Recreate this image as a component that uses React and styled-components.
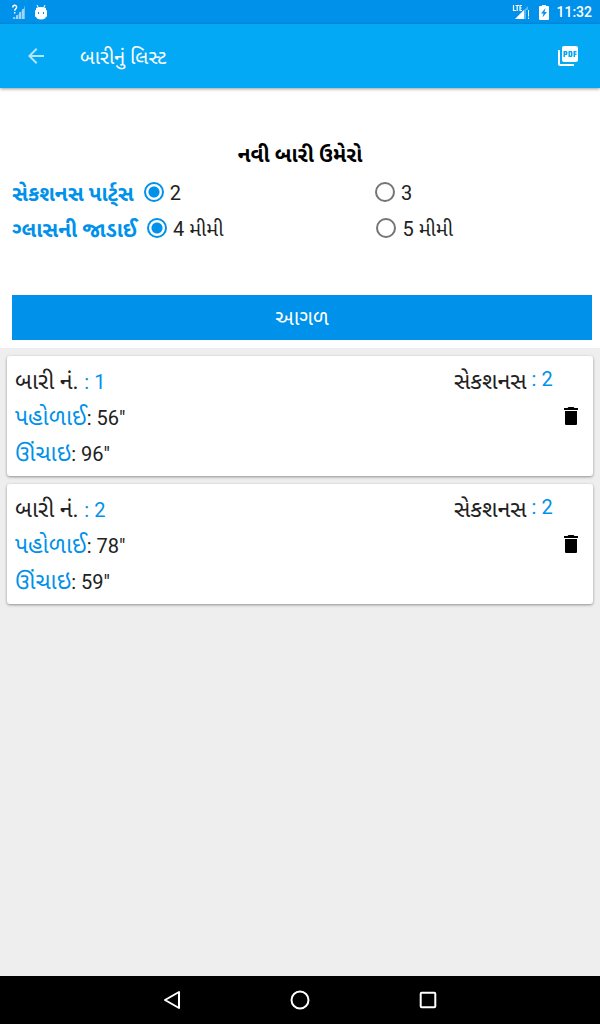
import React, { useState } from 'react'
import styled, { createGlobalStyle } from 'styled-components'
import { MdArrowBack, MdPictureAsPdf } from 'react-icons/md'

const windows = [
  { id: 1, width: 56, height: 96, sections: 2 },
  { id: 2, width: 78, height: 59, sections: 2 },
]

export default function App() {
  const [parts, setParts] = useState('2')
  const [glass, setGlass] = useState('4')

  return (
    <Screen>
      <GlobalStyle />
      <StatusBar>
        <StatusGroup>
          <svg width="14" height="16" viewBox="0 0 14 16">
            <path d="M1 15V13H3V15ZM4 15V11H6V15ZM7 15V8H9V15ZM10 15V5H12V15ZM12.500 15V2H13V15Z" fill="#fff" opacity=".5" />
            <path d="M2 15L13 3V15Z" fill="#fff" opacity=".25" />
            <path d="M.8 3.500C.8 .6 4.600 .6 4.600 3.200C4.600 4.800 2.700 4.800 2.700 6.800M2.700 8V9.600" fill="none" stroke="#fff" strokeWidth="1.500" />
          </svg>
          <svg width="12" height="15" viewBox="0 0 12 15">
            <path d="M2 0L3.500 3M10 0L8.500 3" stroke="#fff" strokeWidth="1" />
            <path fillRule="evenodd" d="M1 3Q6 1 11 3V5Q12 5 12 6V11Q12 12 11 12Q10 14.500 6 14.500Q2 14.500 1 12Q0 12 0 11V6Q0 5 1 5ZM3 7V9H4V7ZM8 7V9H9V7Z" fill="#fff" />
          </svg>
        </StatusGroup>
        <StatusGroup>
          <svg width="18" height="16" viewBox="0 0 18 16">
            <path d="M16 2V6H14V15H3Z" fill="#fff" opacity=".35" />
            <path d="M3 15L12 6V15Z" fill="#fff" />
            <path d="M1.500 1V6.500H4M3.500 1.500H7M5.200 1.500V7M10 1.500H8V6.500H10M8 4H9.700" fill="none" stroke="#fff" strokeWidth="1.200" />
            <path d="M16.500 6V12.500M16.500 13.500V15" stroke="#fff" />
          </svg>
          <svg width="10" height="15" viewBox="0 0 10 15">
            <path fillRule="evenodd" d="M3 0H7V1H9Q10 1 10 2V14Q10 15 9 15H1Q0 15 0 14V2Q0 1 1 1H3ZM6.500 3L2 8.500H4.500L3.500 12.500L8 7H5.500Z" fill="#fff" />
          </svg>
          <Clock>11:32</Clock>
        </StatusGroup>
      </StatusBar>

      <AppBar>
        <BarButton aria-label="Back" $dim><MdArrowBack size={24} /></BarButton>
        <PageTitle>બારીનું લિસ્ટ</PageTitle>
        <BarButton aria-label="PDF"><MdPictureAsPdf size={24} /></BarButton>
      </AppBar>

      <Form onSubmit={(e) => e.preventDefault()}>
        <FormTitle>નવી બારી ઉમેરો</FormTitle>
        <Field>
          <Legend id="parts">સેકશનસ પાર્ટ્સ</Legend>
          <Options role="radiogroup" aria-labelledby="parts">
            {['2', '3'].map((v) => (
              <Option key={v}>
                <Radio name="parts" checked={parts === v} onChange={() => setParts(v)} />
                {v}
              </Option>
            ))}
          </Options>
        </Field>
        <Field>
          <Legend id="glass">ગ્લાસની જાડાઈ</Legend>
          <Options role="radiogroup" aria-labelledby="glass">
            {['4', '5'].map((v) => (
              <Option key={v}>
                <Radio name="glass" checked={glass === v} onChange={() => setGlass(v)} />
                {v} મીમી
              </Option>
            ))}
          </Options>
        </Field>
        <NextButton type="submit">આગળ</NextButton>
      </Form>

      <List>
        {windows.map((w) => (
          <Card key={w.id}>
            <Details>
              <Line><Name>બારી નં. </Name><Value $blue>: {w.id}</Value></Line>
              <Line><Name $blue>પહોળાઈ</Name><Value>: {w.width}"</Value></Line>
              <Line><Name $blue>ઊંચાઇ</Name><Value>: {w.height}"</Value></Line>
            </Details>
            <Side>
              <SectionLine>
                <Name>સેકશનસ</Name>
                <SectionValue $blue>: {w.sections}</SectionValue>
              </SectionLine>
              <DeleteButton aria-label="Delete">
                <svg width="24" height="24" viewBox="0 0 24 24">
                  <path d="M5 4H8.500L9.500 3H14.500L15.500 4H19V6H5ZM6 7H18V20Q18 21 17 21H7Q6 21 6 20Z" />
                </svg>
              </DeleteButton>
            </Side>
          </Card>
        ))}
      </List>

      <NavBar>
        <NavButton aria-label="Back">
          <svg width="20" height="20" viewBox="0 0 20 20"><path d="M17 2V18L3 10Z" /></svg>
        </NavButton>
        <NavButton aria-label="Home">
          <svg width="20" height="20" viewBox="0 0 20 20"><circle cx="10" cy="10" r="8.500" /></svg>
        </NavButton>
        <NavButton aria-label="Recent apps">
          <svg width="20" height="20" viewBox="0 0 20 20"><rect x="2.700" y="2.700" width="14.600" height="14.600" rx="1" /></svg>
        </NavButton>
      </NavBar>
    </Screen>
  )
}

const GlobalStyle = createGlobalStyle`
* {
  box-sizing: border-box;
}
body {
  margin: 0;
  font-family: Roboto, "Noto Sans Gujarati", "Noto Sans", sans-serif;
  color: #212121;
}
button {
  padding: 0;
  border: 0;
  background: none;
  font-family: inherit;
  cursor: pointer;
}
svg {
  display: block;
}
`
const Screen = styled.div`
display: flex;
flex-direction: column;
min-height: 100vh;
background: #eee;
`
const StatusBar = styled.div`
display: flex;
justify-content: space-between;
align-items: center;
height: 24px;
padding: 0 8px 0 12px;
background: #0091ea;
color: #fff;
`
const StatusGroup = styled.div`
display: flex;
align-items: center;
gap: 9px;
`
const Clock = styled.span`
margin-left: -2px;
font-size: 14px;
font-weight: 500;
line-height: 24px;
`
const AppBar = styled.header`
display: flex;
align-items: center;
height: 64px;
padding: 0 20px 0 24px;
background: #03a9f4;
color: #fff;
box-shadow: 0 1px 3px rgba(0, 0, 0, 0.4);
z-index: 1;
`
const BarButton = styled.button`
color: #fff;
opacity: ${(p) => (p.$dim ? 0.7 : 1)};
`
const PageTitle = styled.h1`
flex: 1;
margin: 0 0 0 32px;
padding-top: 2px;
font-size: 20px;
font-weight: 400;
line-height: 28px;
`
const Form = styled.form`
display: flex;
flex-direction: column;
padding: 48px 8px 8px 12px;
background: #fff;
`
const FormTitle = styled.h2`
margin: 0;
padding-right: 4px;
font-size: 21px;
line-height: 38px;
text-align: center;
color: #000;
`
const Field = styled.div`
display: flex;
height: 36px;
`
const Legend = styled.span`
padding-right: 10px;
font-size: 21px;
font-weight: 700;
line-height: 40px;
color: #0091ea;
white-space: nowrap;
`
const Options = styled.div`
flex: 1;
display: grid;
grid-template-columns: 1fr 1fr;
column-gap: 14px;
`
const Option = styled.label`
display: flex;
gap: 6px;
font-size: 20px;
line-height: 38px;
white-space: nowrap;
`
const Radio = styled.input.attrs({ type: 'radio' })`
appearance: none;
width: 20px;
height: 20px;
margin: 8px 0 0;
border: 2px solid #757575;
border-radius: 50%;
&:checked {
  border-color: #0091ea;
  background: radial-gradient(circle, #0091ea 5px, transparent 6px);
}
`
const NextButton = styled.button`
height: 45px;
margin-top: 49px;
padding-top: 5px;
background: #0091ea;
color: #fff;
font-size: 21px;
`
const List = styled.main`
flex: 1;
display: flex;
flex-direction: column;
gap: 8px;
padding: 8px 7px;
`
const Card = styled.article`
display: flex;
justify-content: space-between;
padding: 7px 8px 5px;
border-radius: 3px;
background: #fff;
box-shadow: 0 1px 3px rgba(0, 0, 0, 0.4);
`
const Details = styled.div`
flex: 1;
`
const Side = styled.div`
width: 131px;
`
const Line = styled.p`
margin: 0;
font-size: 20px;
line-height: 38px;
height: 36px;
white-space: nowrap;
`
const SectionLine = styled(Line)`
display: flex;
gap: 5px;
`
const Name = styled.span`
font-size: 23px;
color: ${(p) => (p.$blue ? '#0091ea' : 'inherit')};
`
const Value = styled.span`
font-size: 20px;
color: ${(p) => (p.$blue ? '#0091ea' : 'inherit')};
`
const SectionValue = styled(Value)`
line-height: 32px;
`
const DeleteButton = styled.button`
display: block;
margin: 5px 2px 0 auto;
color: #000;
`
const NavBar = styled.nav`
display: flex;
justify-content: center;
align-items: center;
gap: 80px;
height: 48px;
background: #000;
`
const NavButton = styled.button`
display: flex;
justify-content: center;
align-items: center;
width: 48px;
height: 48px;
svg {
  fill: none;
  stroke: #fff;
  stroke-width: 2;
  stroke-linejoin: round;
}
`
